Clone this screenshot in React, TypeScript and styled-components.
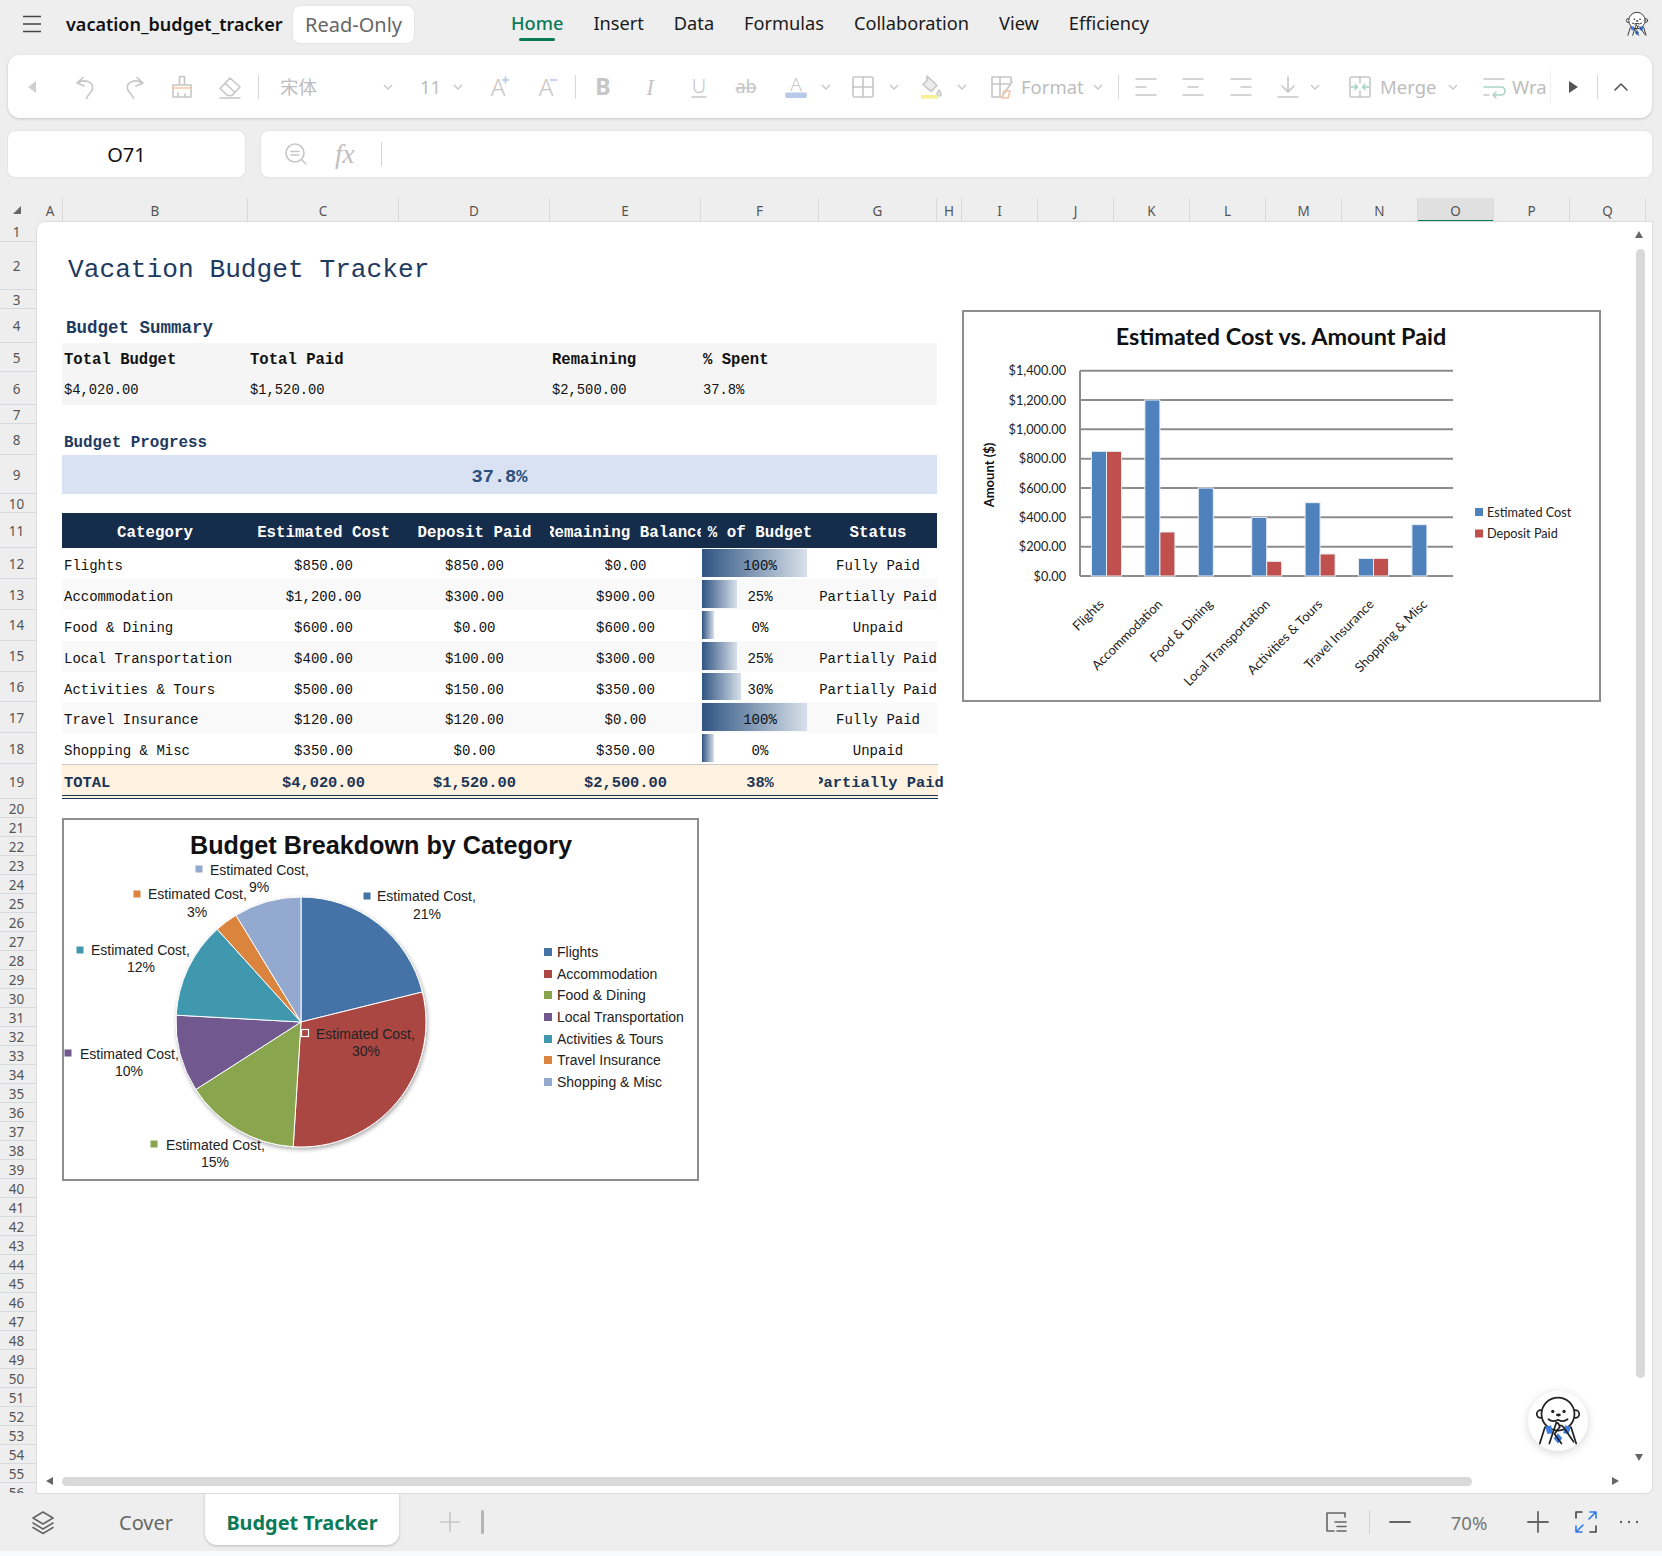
import React from "react";
import styled, { createGlobalStyle } from "styled-components";

const GlobalStyle = createGlobalStyle`
  html, body { margin: 0; padding: 0; background: #eeeeee; }
  body { font-family: "Noto Sans", "Liberation Sans", sans-serif; }
`;

const Page = styled.div`
  width: 1662px; height: 1556px; display: flex; flex-direction: column;
  background: #eeeeee; overflow: hidden; color: #111;
`;

/* ---------- top bar ---------- */
const TopBar = styled.div`display: flex; align-items: center; height: 48px; flex: none;`;
const Hamburger = styled.svg`margin-left: 23px; flex: none;`;
const DocTitle = styled.div`margin-left: 25px; font-size: 18px; font-weight: 600; color: #111; white-space: nowrap; width: 217px;`;
const Chip = styled.div`
  margin-left: 10px; width: 121px; height: 37px; border-radius: 7px; background: #fff;
  display: flex; align-items: center; justify-content: center; font-size: 20px; color: #666;
  box-shadow: 0 0 2px rgba(0,0,0,.12);
`;
const Nav = styled.nav`margin-left: 97px; display: flex; gap: 30px; margin-top: -2px;`;
const NavItem = styled.div<{ $active?: boolean }>`
  position: relative; font-size: 18.2px; white-space: nowrap;
  font-weight: ${(p) => (p.$active ? 500 : 400)};
  color: ${(p) => (p.$active ? "#0a7a57" : "#1a1a1a")};
  ${(p) => p.$active && `&::after { content: ""; position: absolute; left: 8px; right: 8px; bottom: -6px; height: 3px; border-radius: 2px; background: #0a7a57; }`}
`;
const TopMascot = styled.div`margin-left: auto; margin-right: 12px; display: flex;`;

/* ---------- toolbar ---------- */
const Toolbar = styled.div`
  flex: none; margin: 7px 10px 0 8px; height: 63px; background: #fff; border-radius: 12px;
  display: flex; align-items: center; box-shadow: 0 1px 3px rgba(0,0,0,.18); color: #c6c6c6;
`;
const Tool = styled.div<{ $ml: number; $w?: number; $dark?: boolean }>`
  flex: none; margin-left: ${(p) => p.$ml}px; width: ${(p) => p.$w ?? 24}px; height: 26px;
  display: flex; align-items: center; justify-content: flex-start;
  color: ${(p) => (p.$dark ? "#555" : "#c6c6c6")};
`;
const ToolSep = styled.div<{ $ml: number }>`flex: none; margin-left: ${(p) => p.$ml}px; width: 1px; height: 24px; background: #d8d8d8;`;
const ToolText = styled.div<{ $ml: number; $w: number }>`
  flex: none; margin-left: ${(p) => p.$ml}px; width: ${(p) => p.$w}px; white-space: nowrap;
  font-size: 18.5px; color: #bdbdbd; line-height: 26px;
`;
const CjkName = styled.span`font-family: "Noto Sans CJK SC", sans-serif;`;
const Fade = styled.div`flex: none; width: 1px; height: 34px; margin-left: 0; background: #f0f0f0;`;

/* ---------- formula row ---------- */
const FormulaRow = styled.div`flex: none; margin: 13px 10px 0 8px; height: 46px; display: flex; gap: 16px;`;
const NameBox = styled.div`
  width: 237px; background: #fff; border-radius: 7px; display: flex; align-items: center; justify-content: center;
  font-size: 20px; color: #111; box-shadow: 0 0 2px rgba(0,0,0,.14);
`;
const FormulaBox = styled.div`
  flex: 1; background: #fff; border-radius: 7px; display: flex; align-items: center; color: #c6c6c6;
  box-shadow: 0 0 2px rgba(0,0,0,.14);
`;
const FxLabel = styled.div`margin-left: 27px; width: 28px; font-family: "Liberation Serif", serif; font-style: italic; font-size: 27px; color: #c0c0c0;`;
const Caret = styled.div`margin-left: 18px; width: 1px; height: 24px; background: #d4d4d4;`;

/* ---------- grid frame ---------- */
const COLS: [string, number][] = [
  ["A", 25], ["B", 185], ["C", 151], ["D", 151], ["E", 151], ["F", 118], ["G", 118], ["H", 25],
  ["I", 76], ["J", 76], ["K", 76], ["L", 76], ["M", 76], ["N", 76], ["O", 76], ["P", 76], ["Q", 76],
];
const ColHeaderRow = styled.div`flex: none; margin-top: 21px; height: 24px; display: flex;`;
const Corner = styled.div`width: 38px; flex: none; display: flex; align-items: center; padding-left: 12px; box-sizing: border-box; `;
const ColHeader = styled.div<{ $w: number; $sel?: boolean }>`
  width: ${(p) => p.$w}px; flex: none; box-sizing: border-box; display: flex; align-items: center; justify-content: center;
  font-size: 13.5px; padding-top: 2px; color: #555; border-right: 1px solid #d9d9d9;
  background: ${(p) => (p.$sel ? "#e0e0e0" : "transparent")};
  box-shadow: ${(p) => (p.$sel ? "inset 0 -2px 0 #0a7a57" : "none")};
`;
const Body = styled.div`flex: none; height: 1271px; display: flex;`;
const RowHeaders = styled.div`width: 37px; flex: none; overflow: hidden;`;
const RowHeader = styled.div<{ $h: number }>`
  height: ${(p) => p.$h}px; box-sizing: border-box; display: flex; align-items: center; justify-content: center;
  font-size: 13.5px; line-height: 1; color: #555; border-bottom: 1px solid #d6d9dd; padding: 3px 4px 0 0;
`;
const Sheet = styled.div`
  position: relative; width: 1615px; flex: none; background: #fff; overflow: hidden;
  border-radius: 8px 0 6px 0; box-shadow: 0 0 0 1px #dcdcdc;
`;

/* ---------- sheet rows ---------- */
const MONO = `"Liberation Mono", "Courier New", monospace`;
const SheetRow = styled.div<{ $h: number; $bg?: string }>`
  height: ${(p) => p.$h}px; margin-left: 25px; width: 875px; box-sizing: border-box;
  display: grid; grid-template-columns: 186px 151px 151px 151px 118px 118px;
  background: ${(p) => p.$bg ?? "transparent"};
  font-family: ${MONO}; color: #111;
`;
const TotalRow = styled(SheetRow)`
  border-top: 1px solid #c9c9c9; border-bottom: 4px double #1b3557; width: 876px;
`;
const Title = styled.div`grid-column: 1 / -1; align-self: center; padding: 8px 0 0 6px; font-size: 26.2px; color: #1f3a5f; white-space: nowrap;`;
const Section = styled.div<{ $size: number; $pad: number; $x: number }>`
  grid-column: 1 / -1; align-self: end; padding: 0 0 ${(p) => p.$pad}px ${(p) => p.$x}px; font-size: ${(p) => p.$size}px;
  font-weight: 700; color: #1f3a5f; white-space: nowrap;
`;
const SumCell = styled.div<{ $col: number; $strong?: boolean }>`
  grid-column: ${(p) => p.$col}; display: flex; align-items: center; padding: 4px 0 0 2px;
  font-size: ${(p) => (p.$strong ? 15.6 : 13.8)}px; font-weight: ${(p) => (p.$strong ? 700 : 400)}; white-space: nowrap;
`;
const ProgressBand = styled.div`
  grid-column: 1 / -1; background: #d9e2f3; display: flex; align-items: center; justify-content: center;
  padding-top: 4px; font-size: 18.7px; color: #2a4f7c; font-weight: 700;
`;
const HeadCell = styled.div`
  display: flex; align-items: center; justify-content: center; overflow: hidden; white-space: nowrap;
  padding-top: 5px; background: #152c4a; color: #fff; font-size: 15.8px; font-weight: 700;
`;
const DataCell = styled.div<{ $left?: boolean }>`
  position: relative; display: flex; align-items: center; white-space: nowrap;
  justify-content: ${(p) => (p.$left ? "flex-start" : "center")};
  padding: 5px 0 0 ${(p) => (p.$left ? "2px" : "0")};
  font-size: 14px;
`;
const DataBar = styled.div<{ $w: number }>`
  position: absolute; left: 1px; top: 1px; bottom: 2px; width: ${(p) => p.$w}px;
  background: linear-gradient(90deg, #2f5582, #d8e0ea);
`;
const BarValue = styled.span`position: relative;`;
const TotalCell = styled.div<{ $left?: boolean; $spill?: boolean }>`
  display: flex; align-items: center; white-space: nowrap; background: transparent;
  justify-content: ${(p) => (p.$left ? "flex-start" : "center")};
  padding: 6px 0 0 ${(p) => (p.$left ? "2px" : "0")};
  font-size: 15.4px; font-weight: 700; color: #1b3557;
  ${(p) => p.$spill && "clip-path: inset(-4px -12px -4px 0); padding-left: 2px;"}
`;

/* ---------- floating things ---------- */
const ChartFrame = styled.div<{ $x: number; $y: number; $w: number; $h: number }>`
  position: absolute; left: ${(p) => p.$x}px; top: ${(p) => p.$y}px; width: ${(p) => p.$w}px; height: ${(p) => p.$h}px;
  box-sizing: border-box; border: 2px solid #8e8e8e; background: #fff;
`;
const ChartSvg = styled.svg`display: block; position: absolute; left: -2px; top: -2px;`;
const VThumb = styled.div`position: absolute; right: 7px; top: 27px; width: 9px; height: 1129px; border-radius: 5px; background: #d9d9d9;`;
const HThumb = styled.div`position: absolute; left: 25px; top: 1255px; width: 1410px; height: 9px; border-radius: 5px; background: #d9d9d9;`;
const Arrow = styled.div<{ $x: number; $y: number; $dir: "up" | "down" | "left" | "right" }>`
  position: absolute; left: ${(p) => p.$x}px; top: ${(p) => p.$y}px; width: 0; height: 0;
  ${(p) =>
    p.$dir === "up" ? "border-left:4px solid transparent;border-right:4px solid transparent;border-bottom:7px solid #666;"
    : p.$dir === "down" ? "border-left:4px solid transparent;border-right:4px solid transparent;border-top:7px solid #666;"
    : p.$dir === "left" ? "border-top:4px solid transparent;border-bottom:4px solid transparent;border-right:7px solid #666;"
    : "border-top:4px solid transparent;border-bottom:4px solid transparent;border-left:7px solid #666;"}
`;
const MascotBubble = styled.div`
  position: absolute; left: 1491px; top: 1169px; width: 60px; height: 60px; border-radius: 50%; background: #fff;
  box-shadow: 0 2px 10px rgba(0,0,0,.16); display: flex; align-items: center; justify-content: center;
`;

/* ---------- bottom ---------- */
const BottomBar = styled.div`flex: none; height: 58px; display: flex; align-items: center; color: #666;`;
const BottomSlot = styled.div<{ $ml: number; $w?: number; $pale?: boolean }>`
  flex: none; margin-left: ${(p) => p.$ml}px; width: ${(p) => p.$w ?? 24}px; display: flex; align-items: center; justify-content: center;
  color: ${(p) => (p.$pale ? "#c6c6c6" : "inherit")};
`;
const CoverTab = styled.div`margin-left: 64px; width: 54px; font-size: 20px; color: #666; white-space: nowrap;`;
const ActiveTab = styled.div`
  align-self: flex-start; margin-left: 32px; width: 194px; height: 52px; box-sizing: border-box; padding-top: 6px;
  background: #fff; border-radius: 0 0 12px 12px;
  box-shadow: 0 1px 3px rgba(0,0,0,.22); display: flex; align-items: center; justify-content: center;
  font-size: 19.9px; font-weight: 700; color: #0a7a57; white-space: nowrap;
`;
const AddBar = styled.div`margin-left: 19px; width: 3px; height: 24px; border-radius: 2px; background: #b4b4b4;`;
const RightCluster = styled.div`margin-left: auto; margin-right: 21px; display: flex; align-items: center;`;
const ZoomSep = styled.div`margin-left: 21px; width: 1px; height: 24px; background: #d2d2d2;`;
const ZoomValue = styled.div`margin-left: 32px; width: 50px; text-align: center; font-size: 18.5px; color: #777;`;
const FootStrip = styled.div`flex: 1; background: #f8f9fb;`;

/* ---------- icons ---------- */
const IcoSvg = styled.svg`overflow: visible; display: block;`;
const Ico: React.FC<{ children: React.ReactNode; s?: number; sw?: number }> = ({ children, s = 24, sw = 1.6 }) => (
  <IcoSvg width={s} height={s} viewBox="0 0 24 24" fill="none" stroke="currentColor" strokeWidth={sw} strokeLinecap="round" strokeLinejoin="round">{children}</IcoSvg>
);
const Chev = () => (
  <svg width="12" height="12" viewBox="0 0 12 12" fill="none" stroke="currentColor" strokeWidth="1.3"><path d="M2 4l4 4 4-4" /></svg>
);
const GlyphText: React.FC<{ t: string; w?: number; st?: string; fam?: string; y?: number; size?: number }> = ({ t, w = 400, st = "normal", fam = "Noto Sans, sans-serif", y = 19, size = 22 }) => (
  <text x="12" y={y} textAnchor="middle" fontFamily={fam} fontWeight={w} fontStyle={st} fontSize={size} fill="currentColor" stroke="none">{t}</text>
);

const Mascot: React.FC<{ size: number }> = ({ size }) => (
  <svg width={size} height={size} viewBox="0 0 60 60" fill="none" stroke="#222" strokeWidth="2" strokeLinecap="round" strokeLinejoin="round">
    <circle cx="10" cy="22" r="4.500" fill="#fff" />
    <circle cx="50" cy="22" r="4.500" fill="#fff" />
    <circle cx="30" cy="22" r="19" fill="#fff" />
    <circle cx="24" cy="19" r="1.900" fill="#222" stroke="none" />
    <circle cx="37" cy="19" r="1.900" fill="#222" stroke="none" />
    <ellipse cx="30.500" cy="23" rx="2.800" ry="1.700" fill="#222" stroke="none" />
    <path d="M19 28q5 4 11 .5q6 3.500 11-.5" />
    <path d="M15 37l7-2 2 9-6 1zM45 37l-7-2-2 9 6 1z" fill="#3b7de6" stroke="none" />
    <path d="M30 44l-5 6 5 6 5-6z" fill="#3b7de6" stroke="none" />
    <path d="M9 56l6-19M51 56l-6-19" />
    <path d="M28 32l-8 24M28 32q3 0 4 5l-6 8 8 11M33 35q2 0 4 3l11 16" />
  </svg>
);

/* ---------- data ---------- */
type Row = [string, string, string, string, number, number, string];
const ROWS: Row[] = [
  ["Flights", "$850.00", "$850.00", "$0.00", 100, 105, "Fully Paid"],
  ["Accommodation", "$1,200.00", "$300.00", "$900.00", 25, 35, "Partially Paid"],
  ["Food & Dining", "$600.00", "$0.00", "$600.00", 0, 12, "Unpaid"],
  ["Local Transportation", "$400.00", "$100.00", "$300.00", 25, 35, "Partially Paid"],
  ["Activities & Tours", "$500.00", "$150.00", "$350.00", 30, 39, "Partially Paid"],
  ["Travel Insurance", "$120.00", "$120.00", "$0.00", 100, 105, "Fully Paid"],
  ["Shopping & Misc", "$350.00", "$0.00", "$350.00", 0, 12, "Unpaid"],
];
const ROW_H = [20, 48, 19, 34, 29, 33, 19, 31, 39, 19, 35, 30.9, 30.9, 30.9, 30.9, 30.9, 30.9, 30.9, 35, ...Array(37).fill(19)];

/* ---------- bar chart ---------- */
const BAR = [[850, 850], [1200, 300], [600, 0], [400, 100], [500, 150], [120, 120], [350, 0]];
const CATS = ["Flights", "Accommodation", "Food & Dining", "Local Transportation", "Activities & Tours", "Travel Insurance", "Shopping & Misc"];
const LABEL_X = [-5, 0, -3, 1, 0, -2, -2];
const BarChart = () => {
  const y0 = 266, k = 205.3 / 1400, x0 = 118, cw = 53.4;
  const f = "Lato, sans-serif";
  return (
    <ChartSvg width="640" height="393" viewBox="0 0 640 393">
      <text x="319" y="35" textAnchor="middle" fontFamily={f} fontWeight="700" fontSize="23.4" fill="#111">Estimated Cost vs. Amount Paid</text>
      <text transform="translate(32 165) rotate(-90)" textAnchor="middle" fontFamily={f} fontWeight="700" fontSize="13" fill="#111">Amount ($)</text>
      {[0, 200, 400, 600, 800, 1000, 1200, 1400].map((v) => (
        <g key={v}>
          <line x1={x0} x2="491" y1={y0 - v * k} y2={y0 - v * k} stroke="#8c8c8c" strokeWidth="2" />
          <text x="104" y={y0 - v * k + 4.5} textAnchor="end" fontFamily={f} fontSize="12.700" fill="#222">{"$" + v.toLocaleString("en-US") + ".00"}</text>
        </g>
      ))}
      <line x1={x0} x2={x0} y1={y0 - 1400 * k} y2={y0} stroke="#8c8c8c" strokeWidth="2" />
      {BAR.map(([a, b], i) => {
        const x = x0 + 11.5 + i * cw;
        return (
          <g key={i} stroke="#e8edf4" strokeWidth="1">
            <rect x={x} y={y0 - a * k} width={15} height={a * k} fill="#4f81bd" />
            {b > 0 && <rect x={x + 15} y={y0 - b * k} width={15} height={b * k} fill="#c0504d" />}
          </g>
        );
      })}
      {CATS.map((c, i) => (
        <text key={c} transform={`translate(${x0 + 26.7 + i * cw + 3 + LABEL_X[i]} 295) rotate(-45)`} textAnchor="end" fontFamily={f} fontSize="13" fill="#222">{c}</text>
      ))}
      <rect x="513" y="198" width="8" height="8" fill="#4f81bd" />
      <text x="525" y="207" fontFamily={f} fontSize="12.700" fill="#222">Estimated Cost</text>
      <rect x="513" y="219.500" width="8" height="8" fill="#c0504d" />
      <text x="525" y="228" fontFamily={f} fontSize="12.700" fill="#222">Deposit Paid</text>
    </ChartSvg>
  );
};

/* ---------- pie chart ---------- */
const PIE = [850, 1200, 600, 400, 500, 120, 350];
const PIE_C = ["#4572a7", "#aa4643", "#89a54e", "#71588f", "#4198af", "#db843d", "#93a9cf"];
const ox = 62, oy = 818;
const PIE_LABELS: [number, number, number, number, number, number, number][] = [
  // swatch x, swatch y, text x, baseline, pct centre x, pct baseline, colour index
  [367, 896, 377, 901, 427, 919, 0],
  [305, 1033, 316, 1039, 366, 1056, 1],
  [154, 1144, 166, 1150, 215, 1167, 2],
  [68, 1053, 80, 1059, 129, 1076, 3],
  [80, 950, 91, 955, 141, 972, 4],
  [137, 894, 148, 899, 197, 917, 5],
  [199, 869, 210, 875, 259, 892, 6],
];
const PCT = ["21%", "30%", "15%", "10%", "12%", "3%", "9%"];
const PieChart = () => {
  const cx = 301 - ox, cy = 1022 - oy, R = 125, f = "Liberation Sans, Arial, sans-serif";
  const sum = PIE.reduce((a, b) => a + b, 0);
  let acc = 0;
  const pt = (v: number) => {
    const a = (v / sum) * Math.PI * 2;
    return [cx + R * Math.sin(a), cy - R * Math.cos(a)];
  };
  return (
    <ChartSvg width="638" height="364" viewBox="0 0 638 364">
      <defs>
        <filter id="pieShadow" x="-10%" y="-10%" width="120%" height="120%">
          <feDropShadow dx="1" dy="2" stdDeviation="2" floodColor="#000" floodOpacity=".35" />
        </filter>
      </defs>
      <text x="319" y="36" textAnchor="middle" fontFamily={f} fontWeight="700" fontSize="25.200" fill="#111">Budget Breakdown by Category</text>
      <g filter="url(#pieShadow)">
        {PIE.map((v, i) => {
          const [x1, y1] = pt(acc);
          acc += v;
          const [x2, y2] = pt(acc);
          return <path key={i} d={`M${cx} ${cy}L${x1} ${y1}A${R} ${R} 0 ${v / sum > 0.5 ? 1 : 0} 1 ${x2} ${y2}Z`} fill={PIE_C[i]} stroke="#fff" strokeWidth="1" />;
        })}
      </g>
      {PIE_LABELS.map(([sx, sy, tx, ty, px, py, c], i) => (
        <g key={i} fontFamily={f} fontSize="14" fill="#222">
          <rect x={sx - ox - 3.5} y={sy - oy - 3.500} width="7" height="7" fill={PIE_C[c]} stroke={c === 1 ? "#fff" : "none"} strokeWidth="1.200" />
          <text x={tx - ox} y={ty - oy}>Estimated Cost,</text>
          <text x={px - ox} y={py - oy} textAnchor="middle">{PCT[i]}</text>
        </g>
      ))}
      {CATS.map((c, i) => {
        const y = [952, 974, 995, 1017, 1039, 1060, 1082][i] - oy;
        return (
          <g key={c}>
            <rect x={544 - ox} y={y - 4} width="8" height="8" fill={PIE_C[i]} />
            <text x={557 - ox} y={y + 5} fontFamily={f} fontSize="14" fill="#222">{c}</text>
          </g>
        );
      })}
    </ChartSvg>
  );
};

export default function App() {
  return (
    <Page>
      <GlobalStyle />
      <TopBar>
        <Hamburger width="18" height="18" viewBox="0 0 18 18" stroke="#444" strokeWidth="1.6"><path d="M0 1.500h18M0 9h18M0 16.500h18" /></Hamburger>
        <DocTitle>vacation_budget_tracker</DocTitle>
        <Chip>Read-Only</Chip>
        <Nav>
          <NavItem $active>Home</NavItem>
          {["Insert", "Data", "Formulas", "Collaboration", "View", "Efficiency"].map((n) => <NavItem key={n}>{n}</NavItem>)}
        </Nav>
        <TopMascot><Mascot size={26} /></TopMascot>
      </TopBar>

      <Toolbar>
        <Tool $ml={12}><svg width="24" height="24" viewBox="0 0 24 24"><path d="M8 12l8-6v12z" fill="#d0d0d0" /></svg></Tool>
        <Tool $ml={29}><Ico><path d="M10 2.500L4 8l7 3M4.500 8C12 3.500 21 7 19.500 14c-.8 3.500-5 5.500-6 9.500" /></Ico></Tool>
        <Tool $ml={26}><Ico><path d="M14 2.500L20 8l-7 3M19.500 8C12 3.500 3 7 4.500 14c.8 3.500 5 5.500 6 9.500" /></Ico></Tool>
        <Tool $ml={23}><Ico><path d="M9.500 1.500h5v8.500h-5zM3 10h18v12H3zM8 22v-4M15 22v-3" /><path d="M3 13h18" stroke="#f5c6a5" /></Ico></Tool>
        <Tool $ml={24}><Ico><path d="M2 13.500L12 3l10 9-8 8.500H9.500zM7 8l10 9.500M2 23h20" /></Ico></Tool>
        <ToolSep $ml={16} />
        <ToolText $ml={21} $w={40}><CjkName>宋体</CjkName></ToolText>
        <Tool $ml={62} $w={12}><Chev /></Tool>
        <ToolText $ml={26} $w={20}>11</ToolText>
        <Tool $ml={12} $w={12}><Chev /></Tool>
        <Tool $ml={22}><Ico><GlyphText t="A" w={300} y={21} size={24} /><path d="M16.500 5h6M19.500 2v6" stroke="#b4c6e7" /></Ico></Tool>
        <Tool $ml={24}><Ico><GlyphText t="A" w={300} y={21} size={24} /><path d="M16.500 5h6" stroke="#b4c6e7" /></Ico></Tool>
        <ToolSep $ml={17} />
        <Tool $ml={15}><Ico><GlyphText t="B" w={700} size={23} y={20} /></Ico></Tool>
        <Tool $ml={23}><Ico><GlyphText t="I" st="italic" fam="Liberation Serif, serif" size={23} y={20} /></Ico></Tool>
        <Tool $ml={25}><Ico><GlyphText t="U" size={20} y={18} w={300} /><path d="M5 22h14" /></Ico></Tool>
        <Tool $ml={23}><Ico><GlyphText t="ab" size={18} y={18} /><path d="M2 13h20" /></Ico></Tool>
        <Tool $ml={26}><Ico><GlyphText t="A" size={19} y={16} w={300} /><rect x="1" y="17.500" width="22" height="5.500" rx="2" fill="#b8c9ea" stroke="none" /></Ico></Tool>
        <Tool $ml={12} $w={12}><Chev /></Tool>
        <Tool $ml={19}><Ico><rect x="2" y="2" width="20" height="20" rx="1.500" /><path d="M12 2v20M2 12h20" /></Ico></Tool>
        <Tool $ml={13} $w={12}><Chev /></Tool>
        <Tool $ml={19}><Ico><path d="M8 1l10 9.500-6 6-8-7 4-4zM20 15c1 2 2 3 2 4a2 2 0 01-4 0c0-1 1-2 2-4z" fill="#c6c6c6" fillOpacity=".35" /><rect x="2" y="20" width="17" height="3.500" fill="#f4f191" stroke="none" /></Ico></Tool>
        <Tool $ml={13} $w={12}><Chev /></Tool>
        <Tool $ml={22}><Ico><path d="M13 22H2V2h19v5M2 9h17M10 2v20M22 7L13 20" /><path d="M14 16h6l-2 7h-6z" stroke="#f4c4a8" /></Ico></Tool>
        <ToolText $ml={7} $w={60}>Format</ToolText>
        <Tool $ml={11} $w={12}><Chev /></Tool>
        <ToolSep $ml={14} />
        <Tool $ml={15}><Ico><path d="M2 4h20M2 12h10M2 20h20" /></Ico></Tool>
        <Tool $ml={23}><Ico><path d="M2 4h20M7 12h10M2 20h20" /></Ico></Tool>
        <Tool $ml={24}><Ico><path d="M2 4h20M12 12h10M2 20h20" /></Ico></Tool>
        <Tool $ml={23}><Ico><path d="M12 2v15M6 11l6 6 6-6M2 22h20" /></Ico></Tool>
        <Tool $ml={9} $w={12}><Chev /></Tool>
        <Tool $ml={27}><Ico><rect x="2" y="2" width="20" height="20" rx="1.500" /><path d="M12 2v6M12 16v6" /><path d="M3 12h6M7 9.500l2.500 2.500L7 14.500M21 12h-6M17 9.500L14.500 12l2.500 2.500" stroke="#a8d5c3" /></Ico></Tool>
        <ToolText $ml={8} $w={55}>Merge</ToolText>
        <Tool $ml={12} $w={12}><Chev /></Tool>
        <Tool $ml={23}><Ico><path d="M2 4h20M2 20h5" /><path d="M2 12h17a3 3 0 010 8h-8M14 17l-3 3 3 3" stroke="#a8d5c3" /></Ico></Tool>
        <ToolText $ml={6} $w={38}>Wra</ToolText>
        <Fade />
        <Tool $ml={17} $w={12} $dark><svg width="12" height="14" viewBox="0 0 12 14"><path d="M1 1l9 6-9 6z" fill="currentColor" /></svg></Tool>
        <ToolSep $ml={17} />
        <Tool $ml={11} $dark><Ico><path d="M6 15l6-6 6 6" /></Ico></Tool>
      </Toolbar>

      <FormulaRow>
        <NameBox>O71</NameBox>
        <FormulaBox>
          <Tool $ml={23}><Ico><circle cx="11" cy="11" r="9" /><path d="M7 9.500h8M7 13h8M17.500 17.500L22 22" /></Ico></Tool>
          <FxLabel>fx</FxLabel>
          <Caret />
        </FormulaBox>
      </FormulaRow>

      <ColHeaderRow>
        <Corner><svg width="10" height="10" viewBox="0 0 10 10"><path d="M9 1v8H1z" fill="#666" /></svg></Corner>
        {COLS.map(([c, w]) => <ColHeader key={c} $w={w} $sel={c === "O"}>{c}</ColHeader>)}
      </ColHeaderRow>

      <Body>
        <RowHeaders>
          {ROW_H.map((h, i) => <RowHeader key={i} $h={h}>{i + 1}</RowHeader>)}
        </RowHeaders>
        <Sheet>
          <SheetRow $h={20} />
          <SheetRow $h={48}><Title>Vacation Budget Tracker</Title></SheetRow>
          <SheetRow $h={19} />
          <SheetRow $h={34}><Section $size={17.5} $pad={5} $x={4}>Budget Summary</Section></SheetRow>
          <SheetRow $h={29} $bg="#f5f5f5">
            <SumCell $col={1} $strong>Total Budget</SumCell>
            <SumCell $col={2} $strong>Total Paid</SumCell>
            <SumCell $col={4} $strong>Remaining</SumCell>
            <SumCell $col={5} $strong>% Spent</SumCell>
          </SheetRow>
          <SheetRow $h={33} $bg="#f5f5f5">
            <SumCell $col={1}>$4,020.00</SumCell>
            <SumCell $col={2}>$1,520.00</SumCell>
            <SumCell $col={4}>$2,500.00</SumCell>
            <SumCell $col={5}>37.8%</SumCell>
          </SheetRow>
          <SheetRow $h={19} />
          <SheetRow $h={31}><Section $size={15.9} $pad={3} $x={2}>Budget Progress</Section></SheetRow>
          <SheetRow $h={39}><ProgressBand>37.8%</ProgressBand></SheetRow>
          <SheetRow $h={19} />
          <SheetRow $h={35}>
            {["Category", "Estimated Cost", "Deposit Paid", "Remaining Balance", "% of Budget", "Status"].map((h) => <HeadCell key={h}>{h}</HeadCell>)}
          </SheetRow>
          {ROWS.map((r, i) => (
            <SheetRow key={r[0]} $h={30.9} $bg={i % 2 ? "#f9f9f9" : "#fff"}>
              <DataCell $left>{r[0]}</DataCell>
              <DataCell>{r[1]}</DataCell>
              <DataCell>{r[2]}</DataCell>
              <DataCell>{r[3]}</DataCell>
              <DataCell><DataBar $w={r[5]} /><BarValue>{r[4]}%</BarValue></DataCell>
              <DataCell>{r[6]}</DataCell>
            </SheetRow>
          ))}
          <TotalRow $h={35} $bg="#fff2e0">
            <TotalCell $left>TOTAL</TotalCell>
            <TotalCell>$4,020.00</TotalCell>
            <TotalCell>$1,520.00</TotalCell>
            <TotalCell>$2,500.00</TotalCell>
            <TotalCell>38%</TotalCell>
            <TotalCell $spill>Partially Paid</TotalCell>
          </TotalRow>

          <ChartFrame $x={925} $y={88} $w={639} $h={392}><BarChart /></ChartFrame>
          <ChartFrame $x={25} $y={596} $w={637} $h={363}><PieChart /></ChartFrame>

          <VThumb />
          <HThumb />
          <Arrow $dir="up" $x={1598} $y={9} />
          <Arrow $dir="down" $x={1598} $y={1232} />
          <Arrow $dir="left" $x={9} $y={1255} />
          <Arrow $dir="right" $x={1575} $y={1255} />
          <MascotBubble><Mascot size={52} /></MascotBubble>
        </Sheet>
      </Body>

      <BottomBar>
        <BottomSlot $ml={31}><Ico><path d="M12 2l10 6-10 6L2 8zM2 13l10 6 10-6M2 17.500l10 6 10-6" /></Ico></BottomSlot>
        <CoverTab>Cover</CoverTab>
        <ActiveTab>Budget Tracker</ActiveTab>
        <BottomSlot $ml={39} $pale><Ico><path d="M12 3v18M3 12h18" /></Ico></BottomSlot>
        <AddBar />
        <RightCluster>
          <BottomSlot $ml={0}><Ico><path d="M16 3H3v18h7M15 3h6v4M11 12h11M13 16.500h9M13 21h9" /></Ico></BottomSlot>
          <ZoomSep />
          <BottomSlot $ml={18}><Ico sw={1.8}><path d="M2 12h20" /></Ico></BottomSlot>
          <ZoomValue>70%</ZoomValue>
          <BottomSlot $ml={32}><Ico sw={1.8}><path d="M12 2v20M2 12h20" /></Ico></BottomSlot>
          <BottomSlot $ml={24}>
            <Ico sw={1.6}>
              <path d="M8 2H2v6M22 16v6h-6" stroke="#444" />
              <path d="M16 2h6v6M22 2l-7 7M2 16v6h6M2 22l7-7" stroke="#2f7bea" />
            </Ico>
          </BottomSlot>
          <BottomSlot $ml={19}><Ico sw={2.4}><path d="M4 12h.01M12 12h.01M20 12h.01" /></Ico></BottomSlot>
        </RightCluster>
      </BottomBar>
      <FootStrip />
    </Page>
  );
}
